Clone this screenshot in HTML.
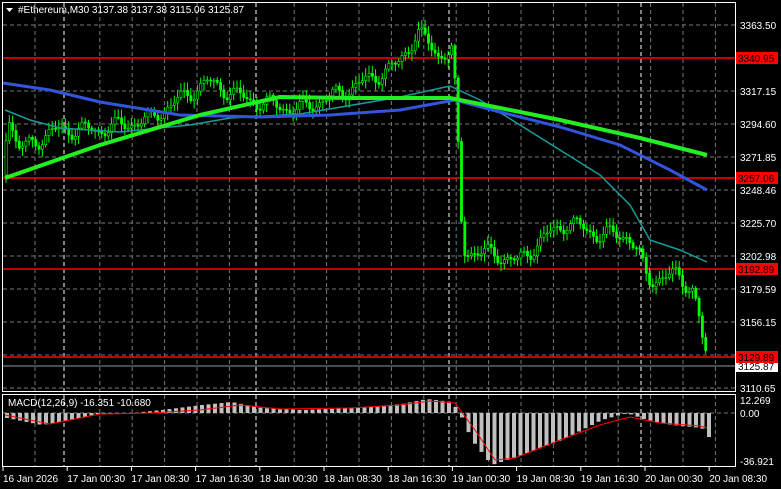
<!DOCTYPE html><html><head><style>
body{margin:0;background:#000;width:781px;height:489px;overflow:hidden;font-family:"Liberation Sans",sans-serif}
svg{display:block}
text{font-family:"Liberation Sans",sans-serif;font-size:10px;fill:#fff}
</style></head><body>
<svg id="s" width="781" height="489" xmlns="http://www.w3.org/2000/svg">
<rect width="781" height="489" fill="#000"/>
<g id="grid"></g>
<g id="macd"></g>
<g id="cand"></g>
<g id="ma"></g>
<rect x="2.5" y="2.5" width="733" height="389" fill="none" stroke="#fff"/>
<rect x="2.5" y="394.5" width="733" height="72" fill="none" stroke="#fff"/>
<g id="lbl"></g>
<polygon points="6,8 13,8 9.5,12" fill="#fff"/>
<text x="18" y="13">#Ethereum,M30  3137.38 3137.38 3115.06 3125.87</text>
<text x="8" y="406">MACD(12,26,9) -16.351 -10.680</text>
</svg>
<script>
const NS="http://www.w3.org/2000/svg";
function el(p,t,a,txt){const e=document.createElementNS(NS,t);for(const k in a)e.setAttribute(k,a[k]);if(txt)e.textContent=txt;document.getElementById(p).appendChild(e);return e;}
const days=[64,256,449,641];
for(let x=35;x<735;x+=32.4){if(days.some(d=>Math.abs(d-x)<6))continue;el('grid','line',{x1:x,y1:3,x2:x,y2:391,stroke:'#777','stroke-dasharray':'4,3'});el('grid','line',{x1:x,y1:395,x2:x,y2:466,stroke:'#777','stroke-dasharray':'4,3'});}
days.forEach(x=>{el('grid','line',{x1:x,y1:3,x2:x,y2:466,stroke:'#fff','stroke-dasharray':'4,3'})});
for(let y=25;y<390;y+=33)el('grid','line',{x1:3,y1:y,x2:735,y2:y,stroke:'#777','stroke-dasharray':'4,3'});
el('grid','line',{x1:3,y1:413,x2:735,y2:413,stroke:'#777','stroke-dasharray':'4,3'});
const pl=[[25,'3363.50'],[91,'3317.15'],[124,'3294.60'],[157,'3271.85'],[190,'3248.46'],[223,'3225.70'],[256,'3202.98'],[289,'3179.59'],[322,'3156.15'],[388,'3110.65']];
pl.forEach(([y,t])=>el('lbl','text',{x:740,y:y+4},t));
[[58,'3340.95'],[178,'3257.06'],[269,'3192.89']].forEach(([y,t])=>{el('grid','line',{x1:3,y1:y,x2:735,y2:y,stroke:'#f00','stroke-width':1.5});el('lbl','rect',{x:736,y:y-6,width:42,height:12,fill:'#f00'});el('lbl','text',{x:738,y:y+4,style:'fill:#000'},t);});
el('grid','line',{x1:3,y1:366,x2:735,y2:366,stroke:'#8899aa'});
el('grid','line',{x1:3,y1:357,x2:735,y2:357,stroke:'#f00','stroke-width':1.5});
el('lbl','rect',{x:736,y:361,width:42,height:11,fill:'#fff'});el('lbl','text',{x:738,y:370,style:'fill:#000'},'3125.87');
el('lbl','rect',{x:736,y:351,width:42,height:12,fill:'#f00'});el('lbl','text',{x:738,y:361,style:'fill:#000'},'3129.89');
el('lbl','text',{x:740,y:404},'12.269');el('lbl','text',{x:740,y:417},'0.00');el('lbl','text',{x:740,y:465},'-36.921');
const tl=['16 Jan 2026','17 Jan 00:30','17 Jan 08:30','17 Jan 16:30','18 Jan 00:30','18 Jan 08:30','18 Jan 16:30','19 Jan 00:30','19 Jan 08:30','19 Jan 16:30','20 Jan 00:30','20 Jan 08:30'];
tl.forEach((t,i)=>{const x=3+i*64.2;el('lbl','line',{x1:x,y1:467,x2:x,y2:471,stroke:'#fff'});el('lbl','text',{x:x,y:482},t);});
function interp(pts,x){for(let i=1;i<pts.length;i++){if(x<=pts[i][0]){const a=pts[i-1],b=pts[i];return a[1]+(b[1]-a[1])*(x-a[0])/(b[0]-a[0]);}}return pts[pts.length-1][1];}
const P=[[5,175],[10,110],[20,150],[40,140],[60,130],[100,130],[150,120],[200,88],[210,82],[250,100],[300,110],[350,90],[380,75],[400,65],[420,32],[440,55],[455,50],[460,140],[465,250],[500,255],[520,262],[550,235],[570,222],[600,235],[630,235],[640,252],[650,280],[680,275],[695,290],[700,310],[707,355]];
let prev=interp(P,5);
for(let x=5;x<=707;x+=3.3){let c=interp(P,x+3.3)+Math.sin(x*1.7)*6+Math.sin(x*0.37)*4;let o=prev;const hi=Math.min(o,c)-2-Math.abs(Math.sin(x*0.9))*6,lo=Math.max(o,c)+2+Math.abs(Math.cos(x*1.3))*6;
el('cand','line',{x1:x+1,y1:hi,x2:x+1,y2:lo,stroke:'#0f0'});
el('cand','rect',{x:x,y:Math.min(o,c),width:2.2,height:Math.max(1,Math.abs(c-o)),fill:c<o?'#000':'#0f0',stroke:'#0f0','stroke-width':0.6});prev=c;}
function pl2(pts,col,w){el('ma','polyline',{points:pts.map(p=>p.join(',')).join(' '),fill:'none',stroke:col,'stroke-width':w,'stroke-linejoin':'round'});}
pl2([[5,110],[30,120],[60,128],[120,132],[190,125],[230,118],[300,114],[400,97],[450,86],[480,100],[520,125],[560,150],[600,175],[630,205],[650,240],[680,250],[707,262]],'#1a9a9a',1.5);
pl2([[3,83],[50,90],[100,102],[180,115],[260,117],[330,115],[400,110],[455,100],[500,112],[560,127],[620,145],[670,170],[707,190]],'#3355dd',3);
pl2([[5,178],[100,145],[200,115],[280,97],[350,98],[450,98],[560,120],[640,138],[707,155]],'#22ee22',4);
const H=[[5,418],[40,425],[70,420],[100,413],[130,413],[160,410],[200,405],[230,402],[260,408],[300,410],[350,408],[400,404],[425,399],[450,402],[458,413],[470,440],[490,465],[520,455],[560,440],[600,420],[625,413],[645,420],[670,425],[700,428],[707,437]];
for(let x=5;x<=707;x+=6.5){const v=interp(H,x);el('macd','rect',{x:x,y:Math.min(v,413),width:4,height:Math.max(1,Math.abs(v-413)),fill:'#c0c0c0'});}
const S=[[5,415],[30,420],[50,424],[65,421],[100,414],[150,413],[200,410],[240,405],[280,409],[350,408],[400,405],[430,401],[455,403],[475,430],[495,460],[515,458],[560,440],[600,425],[630,417],[660,423],[700,426],[707,428]];
pl2(S,'#f00',1);
</script>
</body></html>
